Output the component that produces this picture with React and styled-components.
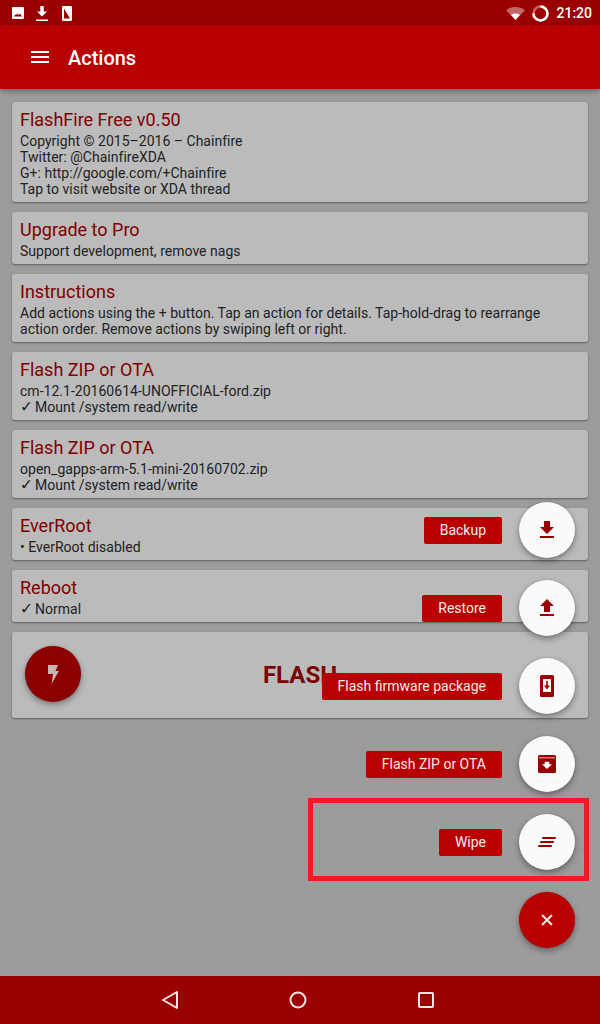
import React from 'react';
import styled, { createGlobalStyle } from 'styled-components';

const Global = createGlobalStyle`
  html, body { margin: 0; padding: 0; }
  body { font-family: Roboto, "Liberation Sans", sans-serif; background: #9c9c9c; }
  * { box-sizing: border-box; }
`;

const Screen = styled.div`
  position: relative;
  width: 600px;
  height: 1024px;
  overflow: hidden;
  display: flex;
  flex-direction: column;
  background: #9c9c9c;
`;

const StatusBar = styled.div`
  height: 25px;
  flex: none;
  background: #9b0000;
  display: flex;
  align-items: center;
  justify-content: space-between;
  padding: 1px 8px 0 12px;
  color: #fff;
`;
const StatusGroup = styled.div`
  display: flex;
  align-items: center;
`;
const StatusSlot = styled.span`
  display: flex;
  margin-right: ${p => p.$after}px;
`;
const Clock = styled.span`
  font-size: 14px;
  font-weight: 500;
  line-height: 16px;
  margin-top: -1px;
`;

const Toolbar = styled.header`
  position: relative;
  z-index: 1;
  height: 64px;
  flex: none;
  background: #b90000;
  box-shadow: 0 2px 6px rgba(0, 0, 0, 0.35);
  display: flex;
  align-items: center;
  padding: 0 0 0 31px;
  gap: 19px;
  color: #fff;
`;
const ToolbarTitle = styled.h1`
  margin: 2px 0 0;
  font-size: 20px;
  font-weight: 500;
  line-height: 24px;
  letter-spacing: -0.02px;
`;

const List = styled.main`
  flex: 1;
  display: flex;
  flex-direction: column;
  gap: 10px;
  padding: 13px 12px 0;
`;
const Card = styled.section`
  background: #bbbbbb;
  border-radius: 3px;
  box-shadow: 0 1px 2px rgba(0, 0, 0, 0.4);
  padding: 7px 8px 5px;
`;
const CardTitle = styled.div`
  font-size: 18px;
  line-height: 21px;
  margin-bottom: 3px;
  color: #7f0000;
`;
const CardLine = styled.div`
  height: 16px;
  font-size: 14px;
  line-height: 16px;
  letter-spacing: 0.02px;
  color: #222;
  white-space: nowrap;
`;
const Tick = styled.span`
  display: inline-block;
  width: 11.500px;
  height: 16px;
  font-family: "DejaVu Sans", sans-serif;
  font-size: 15.500px;
  line-height: 16px;
  color: #1c1c1c;
`;
const FlashCard = styled.section`
  height: 86px;
  background: #bbbbbb;
  border-radius: 3px;
  box-shadow: 0 1px 2px rgba(0, 0, 0, 0.4);
  display: grid;
  grid-template-columns: 1fr auto 1fr;
  align-items: center;
  padding: 0 13px 2px;
`;
const FlashText = styled.div`
  font-size: 24px;
  font-weight: 700;
  margin-top: 2px;
  color: #7b0000;
`;

const Fab = styled.div`
  width: 56px;
  height: 56px;
  flex: none;
  border-radius: 50%;
  background: ${p => p.$bg};
  box-shadow: 0 3px 6px rgba(0, 0, 0, 0.35), 0 0 2px rgba(0, 0, 0, 0.2);
  display: flex;
  align-items: center;
  justify-content: center;
`;

const NavBar = styled.nav`
  height: 48px;
  flex: none;
  background: #9b0000;
  display: grid;
  grid-template-columns: repeat(3, 128px);
  justify-content: center;
  align-items: center;
  justify-items: center;
  padding-right: 4px;
`;

const Menu = styled.div`
  position: absolute;
  top: 502px;
  right: 25px;
  display: flex;
  flex-direction: column;
  align-items: flex-end;
  gap: 22px;
`;
const MenuRow = styled.div`
  display: flex;
  align-items: center;
  gap: 17px;
`;
const MenuLabel = styled.div`
  height: 27px;
  padding: 0 16px;
  background: #b90000;
  border-radius: 2px;
  color: #f8eaea;
  font-size: 14px;
  line-height: 27px;
`;
const Highlight = styled.div`
  position: absolute;
  left: 308px;
  top: 798px;
  width: 281px;
  height: 83px;
  border: 5px solid #ee1c25;
`;

const red = '#9b0000';
const cards = [
  ['FlashFire Free v0.50', ['Copyright © 2015–2016 – Chainfire', 'Twitter: @ChainfireXDA', 'G+: http://google.com/+Chainfire', 'Tap to visit website or XDA thread']],
  ['Upgrade to Pro', ['Support development, remove nags']],
  ['Instructions', ['Add actions using the + button. Tap an action for details. Tap-hold-drag to rearrange', 'action order. Remove actions by swiping left or right.']],
  ['Flash ZIP or OTA', ['cm-12.1-20160614-UNOFFICIAL-ford.zip', '✓ Mount /system read/write']],
  ['Flash ZIP or OTA', ['open_gapps-arm-5.1-mini-20160702.zip', '✓ Mount /system read/write']],
  ['EverRoot', ['• EverRoot disabled']],
  ['Reboot', ['✓ Normal']],
];

const actions = [
  ['Backup', <path d="M19 9h-4V3H9v6H5l7 7 7-7zM5 18v2h14v-2H5z" />],
  ['Restore', <path d="M9 16h6v-6h4l-7-7-7 7h4v6zm-4 2h14v2H5v-2z" />],
  ['Flash firmware package', <path fillRule="evenodd" d="M6.500 1h11A1.500 1.500 0 0 1 19 2.500v19a1.500 1.500 0 0 1-1.500 1.500h-11A1.500 1.500 0 0 1 5 21.500v-19A1.500 1.500 0 0 1 6.500 1zM8 5v13h8V5H8zm3.200 2h1.600v4.500H15l-3 4-3-4h2.200V7z" />],
  ['Flash ZIP or OTA', <path fillRule="evenodd" d="M4.500 3h15A1.500 1.500 0 0 1 21 4.500v15a1.500 1.500 0 0 1-1.500 1.500h-15A1.500 1.500 0 0 1 3 19.500v-15A1.500 1.500 0 0 1 4.500 3zM4 5.600V6.200h16V5.600H4zM9.700 9.700v2.600H7l5 4.700 5-4.700h-2.700V9.700H9.700z" />],
  ['Wipe', <path d="M7.500 7H21l-.5 2H7zM5.500 11H19l-.5 2H5zM3.500 15H17l-.5 2H3z" />],
];

const lineOf = text => {
  if (text.startsWith('✓')) {
    return <><Tick>✓</Tick>{text.slice(1)}</>;
  }
  return text;
};

export default function App() {
  return (
    <Screen>
      <Global />
      <StatusBar>
        <StatusGroup>
          <StatusSlot $after={12}>
            <svg width="12" height="12" viewBox="0 0 12 12" fill="#fff"><path fillRule="evenodd" d="M1 0h10a1 1 0 0 1 1 1v10a1 1 0 0 1-1 1H1a1 1 0 0 1-1-1V1a1 1 0 0 1 1-1zM2 9.500h8L8 6.500 6.700 8 5.300 6.500 4 8 3.200 7.500z" /></svg>
          </StatusSlot>
          <StatusSlot $after={14}>
            <svg width="12" height="15" viewBox="0 0 12 15" fill="#fff"><path d="M4.300 0h3.400v5.500H11L6 10.500 1 5.500h3.300zM0 13.500h12V15H0z" /></svg>
          </StatusSlot>
          <StatusSlot $after={0}>
            <svg width="10" height="15" viewBox="0 0 10 15" fill="#fff"><path fillRule="evenodd" d="M1.200 0h7.600A1.200 1.200 0 0 1 10 1.200v12.600A1.200 1.200 0 0 1 8.800 15H1.200A1.200 1.200 0 0 1 0 13.800V1.200A1.200 1.200 0 0 1 1.200 0zM2 2.500v10h6z" /></svg>
          </StatusSlot>
        </StatusGroup>
        <StatusGroup>
          <StatusSlot $after={7}>
            <svg width="19" height="13" viewBox="0 0 19 13">
              <path d="M0 3.200C5-1 14-1 19 3.200L9.500 13z" fill="#fff" fillOpacity="0.4" />
              <path d="M5 7.800C8 6 11 6 14 7.800L9.500 13z" fill="#fff" />
            </svg>
          </StatusSlot>
          <StatusSlot $after={7}>
            <svg width="17" height="17" viewBox="0 0 17 17" fill="none" strokeWidth="2.500">
              <circle cx="8.500" cy="8.500" r="7" stroke="#fff" strokeOpacity="0.4" />
              <path d="M8.500 1.500A7 7 0 1 1 1.500 8.500" stroke="#fff" />
            </svg>
          </StatusSlot>
          <Clock>21:20</Clock>
        </StatusGroup>
      </StatusBar>
      <Toolbar>
        <svg width="18" height="14" viewBox="0 0 18 14" fill="#fff"><path d="M0 1h18v2H0zM0 6h18v2H0zM0 11h18v2H0z" /></svg>
        <ToolbarTitle>Actions</ToolbarTitle>
      </Toolbar>
      <List>
        {cards.map(([title, lines], i) => (
          <Card key={i}>
            <CardTitle>{title}</CardTitle>
            {lines.map(l => <CardLine key={l}>{lineOf(l)}</CardLine>)}
          </Card>
        ))}
        <FlashCard>
          <Fab $bg="#8c0000">
            <svg width="12" height="20" viewBox="0 0 12 20" fill="#c9b4b4"><path d="M1 1h10L8.500 7H12L4.500 20 6 10H1z" /></svg>
          </Fab>
          <FlashText>FLASH</FlashText>
          <span />
        </FlashCard>
      </List>
      <NavBar>
        <svg width="18" height="20" viewBox="0 0 18 20" fill="none" stroke="#f4e6e6" strokeWidth="2"><path d="M16 2v16L2 10z" strokeLinejoin="round" /></svg>
        <svg width="18" height="18" viewBox="0 0 18 18" fill="none" stroke="#f4e6e6" strokeWidth="2"><circle cx="9" cy="9" r="7.500" /></svg>
        <svg width="16" height="16" viewBox="0 0 16 16" fill="none" stroke="#f4e6e6" strokeWidth="2"><rect x="1" y="1" width="14" height="14" rx="1" /></svg>
      </NavBar>
      <Menu>
        {actions.map(([label, path]) => (
          <MenuRow key={label}>
            <MenuLabel>{label}</MenuLabel>
            <Fab $bg="#fafafa"><svg width="24" height="24" viewBox="0 0 24 24" fill={red}>{path}</svg></Fab>
          </MenuRow>
        ))}
        <Fab $bg="#b90000">
          <svg width="12" height="12" viewBox="0 0 12 12" stroke="#f8eaea" strokeWidth="2"><path d="M1 1l10 10M11 1L1 11" /></svg>
        </Fab>
      </Menu>
      <Highlight />
    </Screen>
  );
}
